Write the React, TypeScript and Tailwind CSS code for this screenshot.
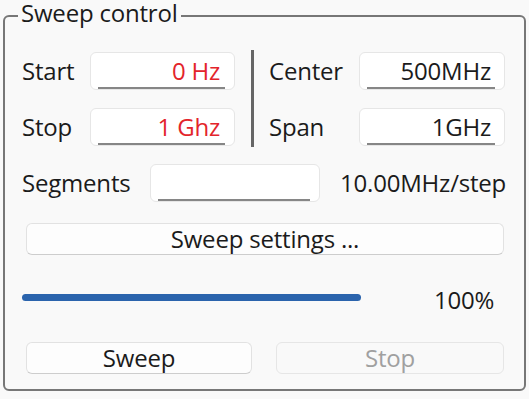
import React from "react";

function Field({ value, w, red, pr }: { value: string; w: string; red?: boolean; pr: string }) {
  return (
    <div
      className={`relative h-[38px] ${w} rounded-[6px] border border-[#e6e6e6] bg-white flex items-center justify-end ${pr} ${
        red ? "text-[#e3242b]" : "text-[#1b1b1b]"
      }`}
    >
      <span className="leading-none">{value}</span>
      <div className="absolute bottom-[0px] left-[7px] right-[9px] h-[2px] bg-[#868686]" />
    </div>
  );
}

export default function App() {
  return (
    <div
      className="w-[529px] h-[399px] overflow-hidden bg-[#f9f9f9] pl-[3px] pr-[3px] pb-[4px] pt-[4px] text-[24px] tracking-[-0.2px] text-[#1b1b1b]"
      style={{ fontFamily: '"Open Sans", "Noto Sans", sans-serif' }}
    >
      <fieldset className="h-[395px] -mt-[8px] border-2 border-[#777777] rounded-[6px] m-0 p-0">
        <legend className="ml-[13px] px-[3px] leading-[33px] pb-[6px]">Sweep control</legend>
        <div className="pl-[17px] pt-[17px] flex flex-col">
          <div className="flex">
            <div className="flex flex-col gap-[18px]">
              <div className="flex items-center">
                <span className="w-[68px]">Start</span>
                <Field value="0 Hz" w="w-[145px]" red pr="pr-[14px]" />
              </div>
              <div className="flex items-center">
                <span className="w-[68px]">Stop</span>
                <Field value="1 Ghz" w="w-[145px]" red pr="pr-[14px]" />
              </div>
            </div>
            <div className="ml-[16px] w-[3px] h-[97px] -mt-[2px] bg-[#666666]" />
            <div className="ml-[15px] flex flex-col gap-[18px]">
              <div className="flex items-center">
                <span className="w-[90px]">Center</span>
                <Field value="500MHz" w="w-[146px]" pr="pr-[13px]" />
              </div>
              <div className="flex items-center">
                <span className="w-[90px]">Span</span>
                <Field value="1GHz" w="w-[146px]" pr="pr-[13px]" />
              </div>
            </div>
          </div>

          <div className="flex items-center mt-[17px]">
            <span className="w-[128px]">Segments</span>
            <Field value="" w="w-[170px]" pr="pr-[13px]" />
            <span className="ml-[20px]">10.00MHz/step</span>
          </div>

          <button className="mt-[21px] ml-[4px] w-[478px] h-[32px] rounded-[6px] border border-[#e2e2e2] border-b-[#cdcdcd] bg-[#fdfdfd] flex items-center justify-center leading-none">
            Sweep settings ...
          </button>

          <div className="flex items-center mt-[39px] h-[7px]">
            <div className="w-[339px] h-[7px] rounded-full bg-[#2b64ad]" />
            <span className="ml-[73px] mt-[5px] leading-none">100%</span>
          </div>

          <div className="flex mt-[41px] ml-[4px] gap-[24px]">
            <button className="w-[226px] h-[32px] rounded-[6px] border border-[#e2e2e2] border-b-[#cdcdcd] bg-[#fdfdfd] flex items-center justify-center leading-none">
              Sweep
            </button>
            <button className="w-[228px] h-[32px] rounded-[6px] border border-[#e6e6e6] bg-[#f9f9f9] text-[#a0a0a0] flex items-center justify-center leading-none">
              Stop
            </button>
          </div>
        </div>
      </fieldset>
    </div>
  );
}
